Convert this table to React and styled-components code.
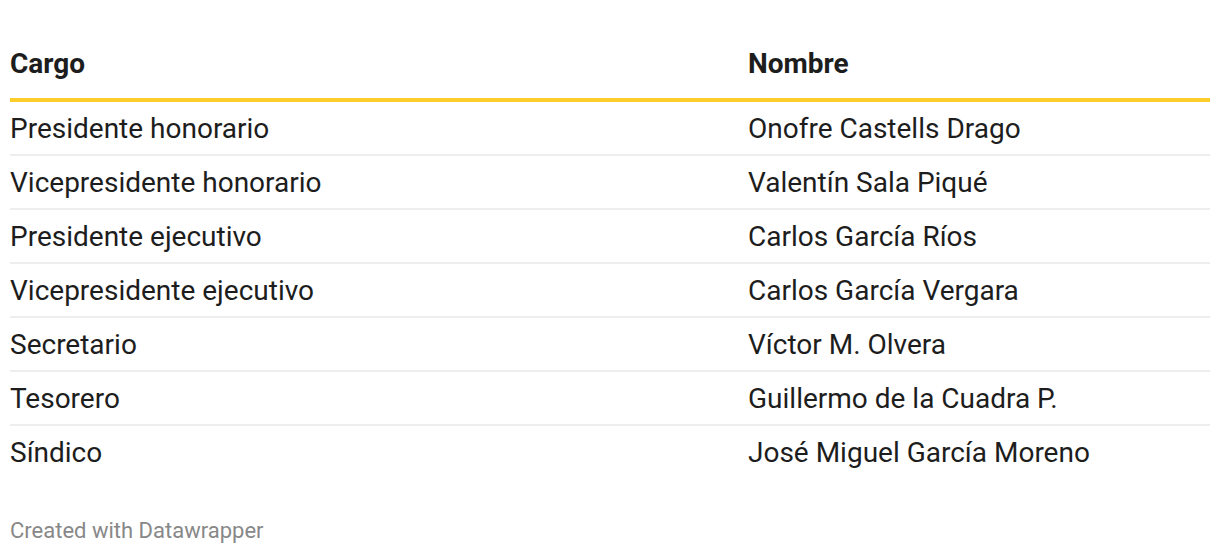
import styled, { createGlobalStyle } from "styled-components";

const rows = [
  ["Presidente honorario", "Onofre Castells Drago"],
  ["Vicepresidente honorario", "Valentín Sala Piqué"],
  ["Presidente ejecutivo", "Carlos García Ríos"],
  ["Vicepresidente ejecutivo", "Carlos García Vergara"],
  ["Secretario", "Víctor M. Olvera"],
  ["Tesorero", "Guillermo de la Cuadra P."],
  ["Síndico", "José Miguel García Moreno"],
];

const GlobalStyle = createGlobalStyle`
  body {
    margin: 0;
    background: #ffffff;
    font-family: Roboto, "Liberation Sans", sans-serif;
    color: #1d1d1d;
  }
`;

function App() {
  return (
    <Page>
      <GlobalStyle />
      <Table>
        <HeadRow>
          <HeadCell>Cargo</HeadCell>
          <HeadCell>Nombre</HeadCell>
        </HeadRow>
        {rows.map(([cargo, nombre], i) => (
          <Row key={cargo} $last={i === rows.length - 1}>
            <Cell>{cargo}</Cell>
            <Cell>{nombre}</Cell>
          </Row>
        ))}
      </Table>
      <Footer>Created with Datawrapper</Footer>
    </Page>
  );
}

export default App;

const Page = styled.main`
  padding: 38px 10px 0;
`;

const Table = styled.div`
  display: flex;
  flex-direction: column;
`;

const HeadRow = styled.div`
  display: grid;
  grid-template-columns: 738px 1fr;
  padding-bottom: 8px;
  border-bottom: 4px solid #fdcd2c;
`;

const HeadCell = styled.div`
  font-size: 28px;
  font-weight: 700;
  line-height: 52px;
  color: #1d1d1d;
`;

const Row = styled.div`
  display: grid;
  grid-template-columns: 738px 1fr;
  border-bottom: ${(p) => (p.$last ? "none" : "2px solid #eeeeee")};
`;

const Cell = styled.div`
  padding-top: 2px;
  font-size: 28px;
  line-height: 50px;
  color: #1d1d1d;
`;

const Footer = styled.div`
  margin-top: 40px;
  font-size: 22px;
  line-height: 26px;
  color: #888888;
`;
